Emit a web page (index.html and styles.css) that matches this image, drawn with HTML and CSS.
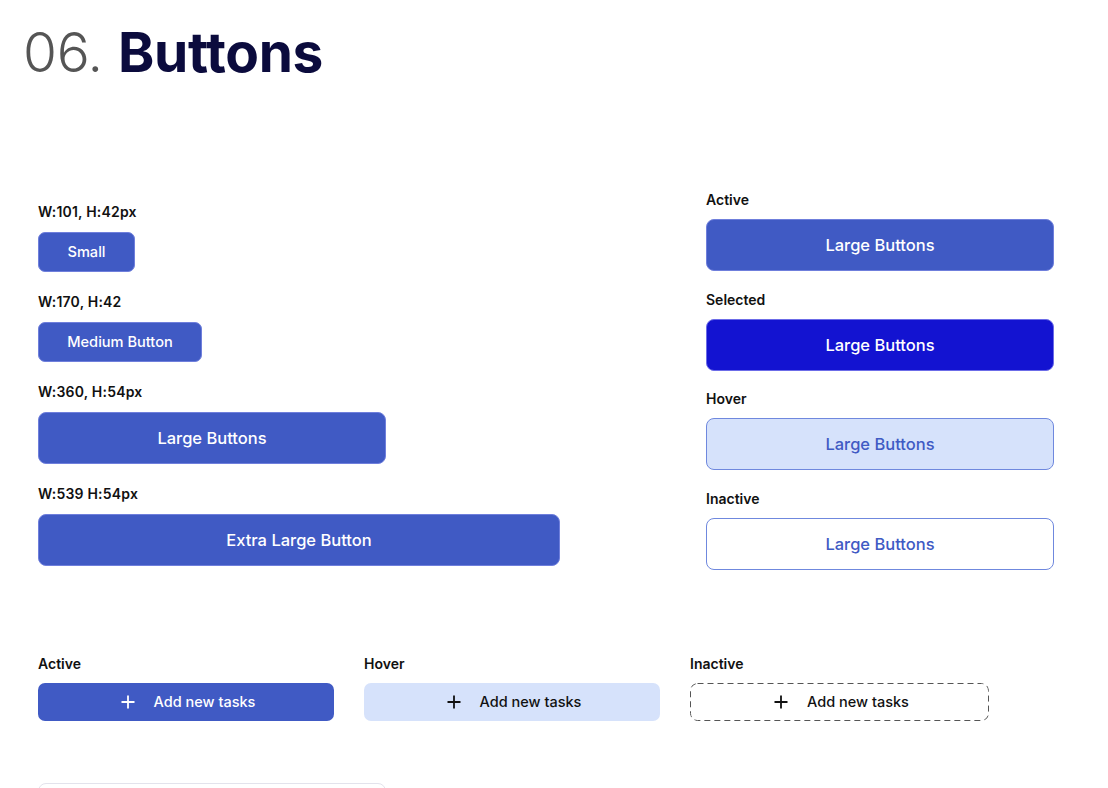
FILE: index.html
```html
<!DOCTYPE html>
<html lang="en">
<head>
<meta charset="utf-8">
<title>06. Buttons</title>
<link rel="stylesheet" href="styles.css">
</head>
<body>
<div class="page">
  <h1 class="title"><span class="num">06.</span> <span class="name">Buttons</span></h1>

  <section class="sizes">
    <div class="col-left">
      <div class="group">
        <div class="label">W:101, H:42px</div>
        <button class="btn primary sm">Small</button>
      </div>
      <div class="group">
        <div class="label">W:170, H:42</div>
        <button class="btn primary md">Medium Button</button>
      </div>
      <div class="group">
        <div class="label">W:360, H:54px</div>
        <button class="btn primary lg">Large Buttons</button>
      </div>
      <div class="group">
        <div class="label">W:539 H:54px</div>
        <button class="btn primary xl">Extra Large Button</button>
      </div>
    </div>
    <div class="col-right">
      <div class="group r">
        <div class="label">Active</div>
        <button class="btn primary lg">Large Buttons</button>
      </div>
      <div class="group r">
        <div class="label">Selected</div>
        <button class="btn selected lg">Large Buttons</button>
      </div>
      <div class="group r">
        <div class="label">Hover</div>
        <button class="btn hover lg">Large Buttons</button>
      </div>
      <div class="group r">
        <div class="label">Inactive</div>
        <button class="btn inactive lg">Large Buttons</button>
      </div>
    </div>
  </section>

  <section class="tasks">
    <div class="group r">
      <div class="label">Active</div>
      <button class="task task-active"><svg class="plus" viewBox="0 0 14 14" width="14" height="14"><path d="M7 0.5V13.5M0.5 7H13.5" stroke="currentColor" stroke-width="1.8" fill="none"/></svg><span>Add new tasks</span></button>
    </div>
    <div class="group r">
      <div class="label">Hover</div>
      <button class="task task-hover"><svg class="plus" viewBox="0 0 14 14" width="14" height="14"><path d="M7 0.5V13.5M0.5 7H13.5" stroke="currentColor" stroke-width="1.8" fill="none"/></svg><span>Add new tasks</span></button>
    </div>
    <div class="group r">
      <div class="label">Inactive</div>
      <button class="task task-inactive"><svg class="plus" viewBox="0 0 14 14" width="14" height="14"><path d="M7 0.5V13.5M0.5 7H13.5" stroke="currentColor" stroke-width="1.8" fill="none"/></svg><span>Add new tasks</span></button>
    </div>
  </section>

  <div class="next-box"></div>
</div>
</body>
</html>
```

FILE: styles.css
```css
* { box-sizing: border-box; }
html, body { margin: 0; padding: 0; background: #fff; }
body {
  font-family: Inter, "Noto Sans", sans-serif;
  color: #111;
  overflow: hidden;
  height: 788px;
}
.page { padding: 25px 0 0 0; }

.title {
  margin: 0 0 0 23px;
  font-family: Inter, "Noto Sans", sans-serif;
  font-size: 55px;
  line-height: 1;
  font-weight: 400;
  letter-spacing: -0.3px;
}
.title .num { color: #555; font-weight: 300; }
.title .name { color: #0b0b3d; font-weight: 700; }

.sizes {
  display: grid;
  grid-template-columns: 668px 348px;
  margin: 111px 0 0 38px;
}
.col-left { display: flex; flex-direction: column; gap: 21px; padding-top: 12px; }
.col-right { display: flex; flex-direction: column; gap: 19.5px; }

.group { display: flex; flex-direction: column; align-items: flex-start; gap: 11px; }
.group.r { gap: 10px; }

.label {
  font-size: 14px;
  line-height: 18px;
  font-weight: 600;
  color: #111;
}
.col-left .label { letter-spacing: 0.2px; }

.btn {
  font-family: Inter, "Noto Sans", sans-serif;
  border: 1px solid #6f7fdc;
  border-radius: 8px;
  color: #fff;
  font-weight: 500;
  display: flex;
  align-items: center;
  justify-content: center;
  padding: 0;
  cursor: pointer;
}
.primary { background: #405ac4; }
.selected { background: #1313d1; border-color: #6c6ce8; }
.hover { background: #d6e2fb; border-color: #6f88de; color: #405ac4; }
.inactive { background: #fff; border-color: #6f88de; color: #405ac4; }

.sm { width: 97px; height: 40px; font-size: 14.6px; border-radius: 7px; }
.md { width: 164px; height: 40px; font-size: 14.6px; border-radius: 7px; }
.lg { width: 348px; height: 52px; font-size: 16.5px; }
.xl { width: 522px; height: 52px; font-size: 16.5px; }

.tasks {
  display: grid;
  grid-template-columns: 296px 296px 299px;
  column-gap: 30px;
  margin: 85px 0 0 38px;
}
.task {
  font-family: Inter, "Noto Sans", sans-serif;
  width: 100%;
  height: 38px;
  border: none;
  border-radius: 7px;
  display: flex;
  align-items: center;
  justify-content: center;
  gap: 19px;
  font-size: 14.5px;
  font-weight: 500;
  padding: 0 0 0 4px;
}
.plus { display: block; }
.task-active { background: #405ac4; color: #fff; }
.task-hover { background: #d6e2fb; color: #111; }
.task-inactive {
  background: #fff url("data:image/svg+xml,%3Csvg xmlns='http://www.w3.org/2000/svg' width='100%25' height='100%25'%3E%3Crect x='0.5' y='0.5' width='calc(100%25 - 1px)' height='calc(100%25 - 1px)' rx='7' fill='none' stroke='%23555' stroke-width='1' stroke-dasharray='6 4'/%3E%3C/svg%3E") no-repeat;
  color: #111;
}

.next-box {
  margin: 62px 0 0 38px;
  width: 348px;
  height: 60px;
  border: 1px solid #e3e3ec;
  border-radius: 8px;
}
```
